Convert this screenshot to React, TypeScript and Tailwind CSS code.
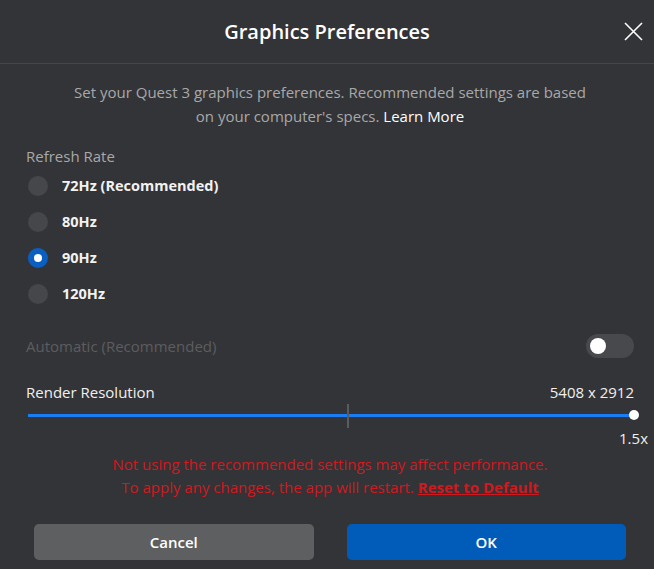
import { useState } from 'react'

const rates = ['72Hz (Recommended)', '80Hz', '90Hz', '120Hz']

function Radio({ checked }: { checked: boolean }) {
  return checked ? (
    <span className="flex h-5 w-5 items-center justify-center rounded-full bg-[#0a5fc2]">
      <span className="h-2 w-2 rounded-full bg-white" />
    </span>
  ) : (
    <span className="h-5 w-5 rounded-full bg-[#46474a]" />
  )
}

export default function App() {
  const [rate, setRate] = useState('90Hz')
  const [auto, setAuto] = useState(false)

  return (
    <div className="flex min-h-screen w-full flex-col bg-[#333437] font-['Open_Sans',sans-serif] text-[#f0f0f0]">
      <header className="flex h-[64px] items-center justify-center border-b border-[#46474a] relative">
        <h1 className="text-[20px] font-semibold text-white">Graphics Preferences</h1>
        <button className="absolute right-[11px] top-[22px] text-white" aria-label="Close">
          <svg width="19" height="19" viewBox="0 0 19 19" stroke="currentColor" strokeWidth="1.6" fill="none">
            <path d="M1 1 L18 18 M18 1 L1 18" />
          </svg>
        </button>
      </header>

      <div className="flex flex-col pl-[26px] pr-[20px]">
        <p className="mt-[16px] text-center text-[15px] leading-[24px] text-[#a8a8aa]">
          Set your Quest 3 graphics preferences. Recommended settings are based
          <br />
          on your computer&apos;s specs. <span className="text-white">Learn More</span>
        </p>

        <div className="mt-[16px] text-[15px] leading-[24px] text-[#a8a8aa]">Refresh Rate</div>
        <div className="flex flex-col">
          {rates.map((r) => (
            <label
              key={r}
              className="flex h-[36px] cursor-pointer items-center gap-[14px] pl-[2px]"
              onClick={() => setRate(r)}
            >
              <Radio checked={rate === r} />
              <span className="text-[14.5px] font-bold text-[#f2f2f2]">{r}</span>
            </label>
          ))}
        </div>

        <div className="mt-[22px] flex h-[24px] items-center justify-between">
          <span className="text-[15px] text-[#5c5d60]">Automatic (Recommended)</span>
          <button
            className="flex h-[24px] w-[48px] items-center rounded-full bg-[#48494c] px-[4px]"
            onClick={() => setAuto(!auto)}
          >
            <span className={auto ? 'ml-auto h-4 w-4 rounded-full bg-white' : 'h-4 w-4 rounded-full bg-white'} />
          </button>
        </div>

        <div className="mt-[22px] flex h-[24px] items-center justify-between text-[15px] text-[#f0f0f0]">
          <span>Render Resolution</span>
          <span>5408 x 2912</span>
        </div>

        {/* slider: track, middle tick and thumb */}
        <div className="relative ml-[2px] h-[24px]">
          <div className="absolute left-0 right-0 top-[10px] h-[3px] bg-[#1a7ef2]" />
          <div className="absolute left-[319px] top-0 h-[24px] w-[2px] bg-[#5a5b5e]" />
          <div className="absolute right-[-5px] top-[6px] h-[10px] w-[10px] rounded-full bg-white" />
        </div>
        <div className="flex h-[20px] items-center justify-end">
          <span className="mr-[-14px] text-[15px] text-[#f0f0f0]">1.5x</span>
        </div>

        <div className="mt-[5px] text-center text-[15px] leading-[23px] text-[#d0191f]">
          <div>Not using the recommended settings may affect performance.</div>
          <div>
            To apply any changes, the app will restart.{' '}
            <a href="#" className="font-bold underline">Reset to Default</a>
          </div>
        </div>
      </div>

      <div className="mt-[25px] flex gap-[33px] pl-[34px] pr-[28px]">
        <button className="h-[36px] flex-1 rounded-[5px] bg-[#5e5f61] text-[15px] font-semibold text-white">
          Cancel
        </button>
        <button className="h-[36px] flex-1 rounded-[5px] bg-[#005cb8] text-[15px] font-semibold text-white">
          OK
        </button>
      </div>
    </div>
  )
}
